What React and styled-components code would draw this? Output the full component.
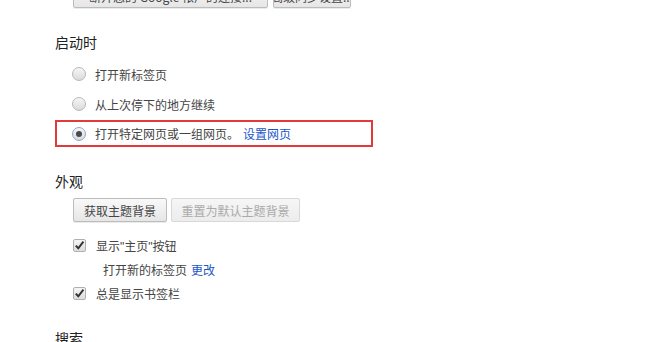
import React from 'react';
import styled, { createGlobalStyle } from 'styled-components';

const GlobalStyle = createGlobalStyle`
  html, body {
    margin: 0;
    padding: 0;
    background: #fff;
    overflow: hidden;
  }
  body {
    font-family: "Noto Sans CJK SC", "Noto Sans", sans-serif;
    color: #333;
  }
`;

const Page = styled.div`
  width: 659px;
  height: 342px;
  overflow: hidden;
  padding-left: 55px;
  box-sizing: border-box;
`;

const TopButtons = styled.div`
  display: flex;
  gap: 5px;
  margin-top: -16px;
  padding-left: 18px;
  height: 25px;
`;

const Button = styled.div`
  height: 24px;
  box-sizing: border-box;
  padding: 0 11px;
  display: flex;
  align-items: center;
  justify-content: center;
  overflow: hidden;
  font-size: 12px;
  color: ${(p) => (p.disabled ? '#aaa' : '#444')};
  border: 1px solid ${(p) => (p.disabled ? '#d8d8d8' : '#bcbcbc')};
  border-radius: 2px;
  background: ${(p) =>
    p.disabled
      ? 'linear-gradient(#f6f6f6, #ececec)'
      : 'linear-gradient(#f9f9f9, #e6e6e6)'};
  box-shadow: ${(p) => (p.disabled ? 'none' : '0 1px 0 rgba(0,0,0,0.08)')};
  white-space: nowrap;
  width: ${(p) => (p.w ? `${p.w}px` : 'auto')};
  flex: none;
`;

const Section = styled.section`
  display: flex;
  flex-direction: column;
`;

const Heading = styled.h3`
  margin: 0;
  font-size: 14px;
  font-weight: normal;
  color: #222;
  height: 20px;
  line-height: 20px;
  margin-top: ${(p) => p.top}px;
`;

const Items = styled.div`
  display: flex;
  flex-direction: column;
  padding-left: 18px;
  margin-top: ${(p) => p.top}px;
`;

const Row = styled.label`
  display: flex;
  align-items: center;
  gap: 10px;
  height: ${(p) => p.h}px;
  font-size: 12px;
  color: #444;
`;

const Highlight = styled.div`
  margin-left: -18px;
  width: 318px;
  height: 27px;
  box-sizing: border-box;
  border: 2px solid #e03a3a;
  padding-left: 16px;
  display: flex;
  align-items: center;
  margin-top: 1px;
`;

const Radio = styled.span`
  width: 14px;
  height: 14px;
  box-sizing: border-box;
  border-radius: 50%;
  border: 1px solid ${(p) => (p.checked ? '#8aa6d6' : '#b8b8b8')};
  background: linear-gradient(#f6f6f6, #dadada);
  display: flex;
  align-items: center;
  justify-content: center;
  flex: none;
  margin-left: -1px;
  margin-right: -1px;

  &::after {
    content: '';
    display: ${(p) => (p.checked ? 'block' : 'none')};
    width: 6px;
    height: 6px;
    border-radius: 50%;
    background: #4a4a4a;
  }
`;

const Box = styled.span`
  width: 13px;
  height: 13px;
  box-sizing: border-box;
  border: 1px solid #b0b0b0;
  border-radius: 2px;
  background: linear-gradient(#f6f6f6, #dcdcdc);
  display: flex;
  align-items: center;
  justify-content: center;
  flex: none;
`;

const Link = styled.span`
  color: #1a56c8;
  margin-left: ${(p) => p.gap || 0}px;
`;

const Quote = styled.span`
  font-family: "Liberation Sans", sans-serif;
`;

const SubLine = styled.div`
  height: 24px;
  display: flex;
  align-items: center;
  padding-left: 30px;
  font-size: 12px;
  color: #444;
`;

const ButtonRow = styled.div`
  display: flex;
  gap: 4px;
  margin-bottom: 11px;
`;

function Check() {
  return (
    <svg width="11" height="11" viewBox="0 0 11 11">
      <path d="M1.8 5.6 L4.3 8.3 L9.4 1.6" fill="none" stroke="#333" strokeWidth="2" />
    </svg>
  );
}

export default function App() {
  return (
    <>
      <GlobalStyle />
      <Page>
        <TopButtons>
          <Button w={195}>断开您的 Google 帐户的连接...</Button>
          <Button w={78}>高级同步设置...</Button>
        </TopButtons>

        <Section>
          <Heading top={23}>启动时</Heading>
          <Items top={7}>
            <Row h={30}>
              <Radio />
              打开新标签页
            </Row>
            <Row h={30}>
              <Radio />
              从上次停下的地方继续
            </Row>
            <Highlight>
              <Row h={23}>
                <Radio checked />
                <span>
                  打开特定网页或一组网页。<Link gap={4}>设置网页</Link>
                </span>
              </Row>
            </Highlight>
          </Items>
        </Section>

        <Section>
          <Heading top={24}>外观</Heading>
          <Items top={7}>
            <ButtonRow>
              <Button w={94}>获取主题背景</Button>
              <Button w={129} disabled>重置为默认主题背景</Button>
            </ButtonRow>
            <Row h={24}>
              <Box>
                <Check />
              </Box>
              <span>
                显示<Quote>"</Quote>主页<Quote>"</Quote>按钮
              </span>
            </Row>
            <SubLine>
              打开新的标签页<Link gap={4}>更改</Link>
            </SubLine>
            <Row h={24}>
              <Box>
                <Check />
              </Box>
              总是显示书签栏
            </Row>
          </Items>
        </Section>

        <Section>
          <Heading top={23}>搜索</Heading>
        </Section>
      </Page>
    </>
  );
}
